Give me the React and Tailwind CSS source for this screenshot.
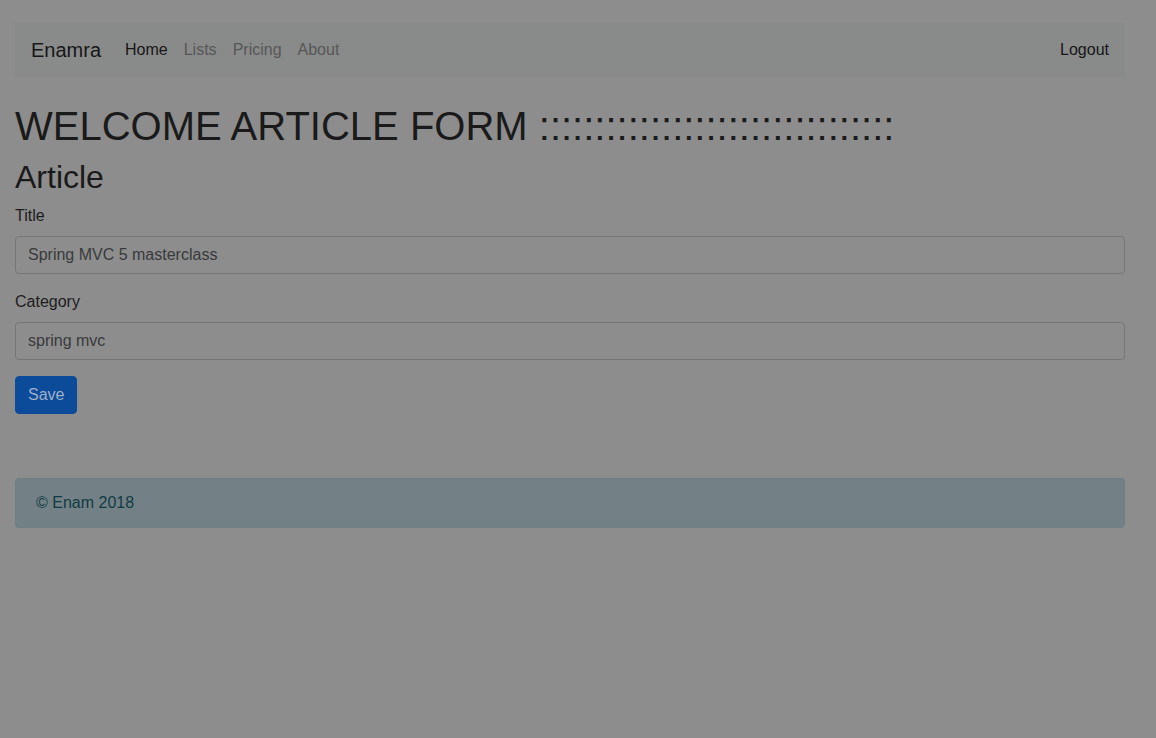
import React from 'react';

const font = { fontFamily: '"Liberation Sans", Arial, sans-serif' };

function NavBar() {
  return (
    <nav className="h-14 bg-[#898a8a] flex items-center px-4">
      <span className="text-[20px] leading-[30px] text-[#171717] mr-4">Enamra</span>
      <ul className="flex items-center">
        <li className="px-2 text-[#171717]">Home</li>
        <li className="px-2 text-[#575757]">Lists</li>
        <li className="px-2 text-[#575757]">Pricing</li>
        <li className="px-2 text-[#575757]">About</li>
      </ul>
      <span className="ml-auto text-[#171717]">Logout</span>
    </nav>
  );
}

function Field({ label, value }) {
  return (
    <div className="mb-4">
      <label className="block mb-2 text-[#1c1c1c]">{label}</label>
      <div className="h-[38px] border border-[#767676] rounded-[4px] px-3 flex items-center text-[#383a3c]">
        {value}
      </div>
    </div>
  );
}

export default function App() {
  return (
    <div className="min-h-[738px] bg-[#8d8d8d] pt-[22px] text-base leading-6" style={font}>
      <div className="ml-[15px] w-[1110px]">
        <NavBar />

        <h1 className="mt-6 text-[40px] leading-[48px] text-[#1a1a1a] mb-2">
          WELCOME ARTICLE FORM ::::::::::::::::::::::::::::::::
        </h1>
        <h2 className="text-[32px] leading-[38px] text-[#1a1a1a] mb-2">Article</h2>

        <Field label="Title" value="Spring MVC 5 masterclass" />
        <Field label="Category" value="spring mvc" />

        <button className="h-[38px] px-3 rounded-[4px] border border-[#0b4b9a] bg-[#0b4b9a] text-[#9fb0c8]">Save</button>

        <footer className="mt-16 h-[50px] px-5 flex items-center bg-[#738186] border border-[#6b7f84] rounded-[4px] text-[#123b43]">
          © Enam 2018
        </footer>
      </div>
    </div>
  );
}
